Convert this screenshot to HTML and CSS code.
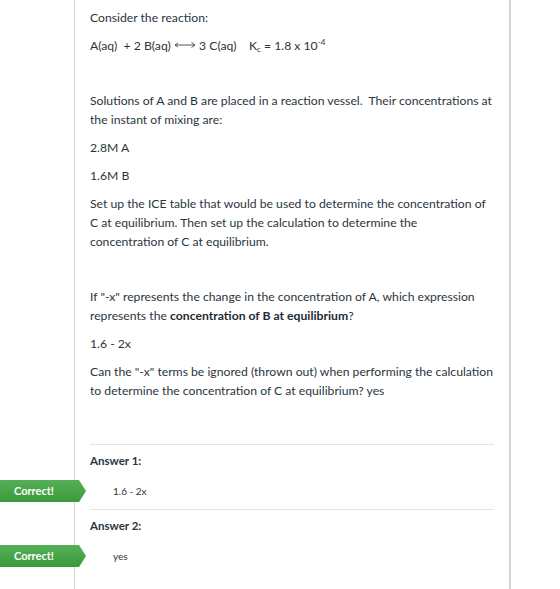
FILE: index.html
```html
<!DOCTYPE html>
<html lang="en">
<head>
<meta charset="utf-8">
<title>Quiz results</title>
<link rel="stylesheet" href="styles.css">
</head>
<body>
<div class="page">
  <div class="question">
    <div class="question-text">
      <p>Consider the reaction:</p>
      <p>A(aq) &nbsp;+ 2 B(aq) <svg class="arrow" width="22" height="8" viewBox="0 0 22 8"><path d="M1 4H21M1 4L4 2M1 4L4 6M21 4L17.5 1.5M21 4L17.5 6.5" fill="none" stroke="#444" stroke-width="0.9"/></svg> 3 C(aq) &nbsp;&nbsp; K<sub>c</sub> = 1.8 x 10<sup>-4</sup></p>
      <p class="blank">&nbsp;</p>
      <p>Solutions of A and B are placed in a reaction vessel.&nbsp; Their concentrations at the instant of mixing are:</p>
      <p>2.8M A</p>
      <p>1.6M B</p>
      <p>Set up the ICE table that would be used to determine the concentration of C at equilibrium. Then set up the calculation to determine the concentration of C at equilibrium.</p>
      <p class="blank">&nbsp;</p>
      <p>If "-x" represents the change in the concentration of A, which expression represents the <strong>concentration of B at equilibrium</strong>?</p>
      <p>1.6 - 2x</p>
      <p>Can the "-x" terms be ignored (thrown out) when performing the calculation to determine the concentration of C at equilibrium? yes</p>
    </div>

    <div class="answers">
      <div class="answer-group">
        <h4 class="answer-label">Answer 1:</h4>
        <div class="answer">
          <span class="badge">Correct!</span>
          <span class="answer-text">1.6 - 2x</span>
        </div>
      </div>
      <div class="answer-group">
        <h4 class="answer-label">Answer 2:</h4>
        <div class="answer">
          <span class="badge">Correct!</span>
          <span class="answer-text">yes</span>
        </div>
      </div>
    </div>
  </div>
</div>
</body>
</html>
```

FILE: styles.css
```css
html, body {
  margin: 0;
  padding: 0;
  background: #fff;
}

body {
  font-family: Lato, "Open Sans", "Liberation Sans", sans-serif;
  color: #2b353d;
  font-size: 12.2px;
}

.page {
  position: relative;
  width: 560px;
  height: 589px;
  overflow: hidden;
}

.question {
  margin-left: 74px;
  width: 437px;
  min-height: 589px;
  border-left: 1px solid #d4d4d4;
  border-right: 2px solid #d4d4d4;
  padding: 8px 15px 0 15px;
  box-sizing: border-box;
}

.question-text p {
  margin: 0 0 8.8px;
  line-height: 19px;
}

.question-text strong {
  font-weight: 700;
  color: #1f2a33;
}

.arrow {
  vertical-align: 1px;
}

sub, sup {
  font-size: 8px;
  line-height: 0;
}

sup {
  vertical-align: 5px;
}

sub {
  vertical-align: -2px;
}

.answers {
  margin-top: 44px;
}

.answer-group {
  border-top: 1px solid #e5e5e5;
  padding-top: 6px;
  height: 58px;
}

.answer-label {
  margin: 0;
  font-size: 11.5px;
  font-weight: 700;
  line-height: 20px;
  color: #2b353d;
}

.answer {
  height: 22px;
  margin-top: 9px;
  display: flex;
  align-items: center;
  padding-left: 23px;
}

.answer-text {
  font-size: 10px;
  color: #2b353d;
}

/* green arrow flag that sits across the left gutter */
.badge {
  position: absolute;
  left: 0;
  width: 86px;
  height: 22px;
  box-sizing: border-box;
  padding-left: 14px;
  line-height: 22px;
  font-size: 11px;
  font-weight: 700;
  color: #fff;
  background: linear-gradient(#55b055, #3a9a3a);
  clip-path: polygon(0 0, 79px 0, 86px 50%, 79px 100%, 0 100%);
}
```
